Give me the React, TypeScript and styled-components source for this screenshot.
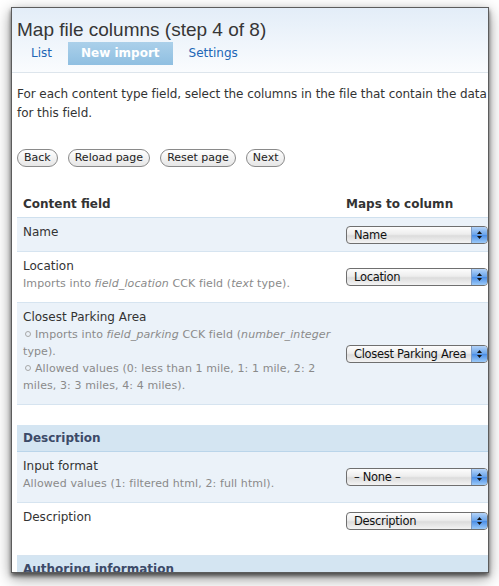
import React from 'react';
import styled, { createGlobalStyle } from 'styled-components';

const Global = createGlobalStyle`
  html, body { margin: 0; padding: 0; background: #fff; }
  body { font-family: "DejaVu Sans", Verdana, sans-serif; }
`;

const Screen = styled.div`
  width: 499px;
  height: 586px;
  overflow: hidden;
  background: #fff;
  padding: 7px 0 0 11px;
  box-sizing: border-box;
`;

const Window = styled.div`
  width: 478px;
  height: 566px;
  box-sizing: border-box;
  border: 1px solid #5c5c5c;
  box-shadow: 0 3px 4px rgba(0, 0, 0, 0.55), 0 5px 14px rgba(0, 0, 0, 0.45);
  overflow: hidden;
  background: #fff;
`;

const Page = styled.div`
  width: 492px;
`;

const Header = styled.div`
  padding: 10px 0 7px 5px;
  background: linear-gradient(#e3edf8, #fafcfe);
  border-bottom: 1px solid #dde5ec;
`;

const Title = styled.h1`
  margin: 0;
  font-family: "Liberation Sans", Arial, sans-serif;
  font-weight: normal;
  font-size: 19px;
  line-height: 24px;
  color: #363636;
`;

const Tabs = styled.div`
  display: flex;
  gap: 3px;
  padding-left: 1px;
`;

const Tab = styled.span<{ $active?: boolean }>`
  display: block;
  height: 23px;
  line-height: 23px;
  padding: 0 13px;
  font-size: 12px;
  font-weight: ${p => (p.$active ? 'bold' : 'normal')};
  color: ${p => (p.$active ? '#fff' : '#2166b6')};
  background: ${p => (p.$active ? 'linear-gradient(#abd0ea, #8fbfe1)' : 'transparent')};
`;

const Content = styled.div`
  padding-left: 5px;
`;

const Intro = styled.p`
  margin: 12px 0 0;
  font-size: 12px;
  line-height: 19px;
  color: #333;
  width: 472px;
  letter-spacing: -0.05px;
`;

const Buttons = styled.div`
  display: flex;
  gap: 10px;
  margin-top: 26px;
`;

const Button = styled.span`
  display: block;
  height: 18px;
  box-sizing: border-box;
  line-height: 16px;
  padding: 0 6px;
  border: 1px solid #8a8a8a;
  border-radius: 9px;
  background: linear-gradient(#ffffff, #e6e6e6);
  font-size: 11px;
  color: #222;
`;

const Table = styled.table`
  margin-top: 24px;
  width: 480px;
  border-collapse: collapse;
  table-layout: fixed;
`;

const HeadCell = styled.th<{ $w?: number }>`
  text-align: left;
  font-size: 12px;
  line-height: 18px;
  padding: 4px 6px;
  color: #333;
  font-weight: bold;
  border-bottom: 1px solid #cfe0ee;
  width: ${p => (p.$w ? `${p.$w}px` : 'auto')};
`;

const Row = styled.tr<{ $shade?: boolean }>`
  background: ${p => (p.$shade ? '#ebf2f9' : '#fff')};
  border-bottom: 1px solid #d6e4f0;
`;

const FieldCell = styled.td`
  vertical-align: top;
  padding: 5px 6px 10px;
`;

const ValueCell = styled.td<{ $tall?: boolean }>`
  vertical-align: ${p => (p.$tall ? 'top' : 'middle')};
  padding: ${p => (p.$tall ? '9px 6px 25px' : '0 6px')};
`;

const FieldName = styled.div`
  font-size: 12px;
  line-height: 18px;
  color: #333;
`;

const Desc = styled.div`
  font-size: 11px;
  line-height: 17px;
  letter-spacing: 0.1px;
  color: #8a8a8a;
`;

const List = styled.ul`
  margin: 0;
  padding: 0;
  list-style: none;
`;

const Item = styled.li`
  font-size: 11px;
  line-height: 17px;
  letter-spacing: 0.1px;
  color: #8a8a8a;
`;

const Bullet = styled.span`
  display: inline-block;
  width: 6px;
  height: 6px;
  border: 1px solid #a8a8a8;
  border-radius: 50%;
  box-sizing: border-box;
  margin: 0 4px 2px 2px;
  vertical-align: middle;
`;

const SectionRow = styled.tr`
  background: #d4e5f2;
  border-bottom: 1px solid #bad5ea;
`;

const SectionCell = styled.th`
  text-align: left;
  font-size: 12px;
  line-height: 18px;
  padding: 4px 6px;
  color: #3c4a68;
  font-weight: bold;
`;

const SpacerCell = styled.td`
  height: 20px;
  padding: 0;
  background: #fff;
`;

const SelectBox = styled.div`
  display: flex;
  align-items: center;
  width: 142px;
  height: 18px;
  box-sizing: border-box;
  border: 1px solid #6f6f6f;
  border-radius: 4px;
  overflow: hidden;
  background: linear-gradient(#fdfdfd, #ededed 45%, #dcdcdc 55%, #f3f3f3);
  font-size: 11.5px;
  color: #111;
`;

const SelectText = styled.span`
  flex: 1;
  padding-left: 7px;
  white-space: nowrap;
  overflow: hidden;
  letter-spacing: -0.3px;
`;

const Arrows = styled.span`
  width: 15px;
  align-self: stretch;
  background: linear-gradient(#b3d3f8, #6aa4ea 48%, #4b8ee6 52%, #9ccaf8);
  border-left: 1px solid #7f9cc4;
  display: flex;
  flex-direction: column;
  align-items: center;
  justify-content: center;
  gap: 2px;
`;

const Select = ({ value }: { value: string }) => (
  <SelectBox>
    <SelectText>{value}</SelectText>
    <Arrows>
      <svg width="5" height="3" viewBox="0 0 5 3"><path d="M2.5 0L5 3H0z" fill="#111" /></svg>
      <svg width="5" height="3" viewBox="0 0 5 3"><path d="M0 0h5L2.5 3z" fill="#111" /></svg>
    </Arrows>
  </SelectBox>
);

export default function App() {
  return (
    <Screen>
      <Global />
      <Window>
        <Page>
          <Header>
            <Title>Map file columns (step 4 of 8)</Title>
            <Tabs>
              <Tab>List</Tab>
              <Tab $active>New import</Tab>
              <Tab>Settings</Tab>
            </Tabs>
          </Header>
          <Content>
            <Intro>
              For each content type field, select the columns in the file that contain the data for this field.
            </Intro>
            <Buttons>
              <Button>Back</Button>
              <Button>Reload page</Button>
              <Button>Reset page</Button>
              <Button>Next</Button>
            </Buttons>
            <Table>
              <thead>
                <tr>
                  <HeadCell $w={311}>Content field</HeadCell>
                  <HeadCell>Maps to column</HeadCell>
                </tr>
              </thead>
              <tbody>
                <Row $shade>
                  <FieldCell>
                    <FieldName>Name</FieldName>
                  </FieldCell>
                  <ValueCell><Select value="Name" /></ValueCell>
                </Row>
                <Row>
                  <FieldCell>
                    <FieldName>Location</FieldName>
                    <Desc>Imports into <em>field_location</em> CCK field (<em>text</em> type).</Desc>
                  </FieldCell>
                  <ValueCell><Select value="Location" /></ValueCell>
                </Row>
                <Row $shade>
                  <FieldCell>
                    <FieldName>Closest Parking Area</FieldName>
                    <List>
                      <Item><Bullet />Imports into <em>field_parking</em> CCK field (<em>number_integer</em> type).</Item>
                      <Item><Bullet />Allowed values (0: less than 1 mile, 1: 1 mile, 2: 2 miles, 3: 3 miles, 4: 4 miles).</Item>
                    </List>
                  </FieldCell>
                  <ValueCell><Select value="Closest Parking Area" /></ValueCell>
                </Row>
                <tr><SpacerCell colSpan={2} /></tr>
                <SectionRow><SectionCell colSpan={2}>Description</SectionCell></SectionRow>
                <Row $shade>
                  <FieldCell>
                    <FieldName>Input format</FieldName>
                    <Desc>Allowed values (1: filtered html, 2: full html).</Desc>
                  </FieldCell>
                  <ValueCell><Select value="– None –" /></ValueCell>
                </Row>
                <Row>
                  <FieldCell>
                    <FieldName>Description</FieldName>
                  </FieldCell>
                  <ValueCell $tall><Select value="Description" /></ValueCell>
                </Row>
                <SectionRow><SectionCell colSpan={2}>Authoring information</SectionCell></SectionRow>
              </tbody>
            </Table>
          </Content>
        </Page>
      </Window>
    </Screen>
  );
}
